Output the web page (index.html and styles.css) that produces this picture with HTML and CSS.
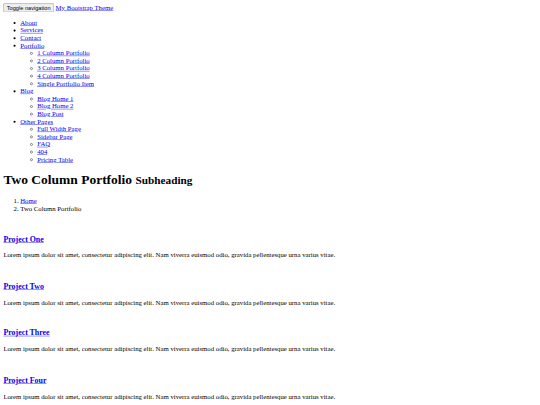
FILE: index.html
```html
<!DOCTYPE html>
<html lang="en" class="page">
<head>
<meta charset="utf-8">
<title>Two Column Portfolio</title>
<link rel="stylesheet" href="styles.css">
</head>
<body class="page-body">
<div class="page-scale">
<nav class="navbar">
  <div class="navbar-header">
    <button type="button" class="navbar-toggle">Toggle navigation</button>
    <a class="navbar-brand" href="#">My Bootstrap Theme</a>
  </div>
  <div class="navbar-collapse">
    <ul class="nav-list">
      <li><a href="#">About</a></li>
      <li><a href="#">Services</a></li>
      <li><a href="#">Contact</a></li>
      <li><a href="#">Portfolio</a>
        <ul class="dropdown">
          <li><a href="#">1 Column Portfolio</a></li>
          <li><a href="#">2 Column Portfolio</a></li>
          <li><a href="#">3 Column Portfolio</a></li>
          <li><a href="#">4 Column Portfolio</a></li>
          <li><a href="#">Single Portfolio Item</a></li>
        </ul>
      </li>
      <li><a href="#">Blog</a>
        <ul class="dropdown">
          <li><a href="#">Blog Home 1</a></li>
          <li><a href="#">Blog Home 2</a></li>
          <li><a href="#">Blog Post</a></li>
        </ul>
      </li>
      <li><a href="#">Other Pages</a>
        <ul class="dropdown">
          <li><a href="#">Full Width Page</a></li>
          <li><a href="#">Sidebar Page</a></li>
          <li><a href="#">FAQ</a></li>
          <li><a href="#">404</a></li>
          <li><a href="#">Pricing Table</a></li>
        </ul>
      </li>
    </ul>
  </div>
</nav>
<div class="container">
  <div class="row">
    <h1 class="page-header">Two Column Portfolio <small class="subheading">Subheading</small></h1>
    <ol class="breadcrumb">
      <li><a href="#">Home</a></li>
      <li class="active">Two Column Portfolio</li>
    </ol>
  </div>
  <div class="row">
    <div class="portfolio-item">
      <a class="thumb-link" href="#"><span class="thumb"></span></a>
      <h3 class="item-title"><a href="#">Project One</a></h3>
      <p class="item-text">Lorem ipsum dolor sit amet, consectetur adipiscing elit. Nam viverra euismod odio, gravida pellentesque urna varius vitae.</p>
    </div>
    <div class="portfolio-item">
      <a class="thumb-link" href="#"><span class="thumb"></span></a>
      <h3 class="item-title"><a href="#">Project Two</a></h3>
      <p class="item-text">Lorem ipsum dolor sit amet, consectetur adipiscing elit. Nam viverra euismod odio, gravida pellentesque urna varius vitae.</p>
    </div>
  </div>
  <div class="row">
    <div class="portfolio-item">
      <a class="thumb-link" href="#"><span class="thumb"></span></a>
      <h3 class="item-title"><a href="#">Project Three</a></h3>
      <p class="item-text">Lorem ipsum dolor sit amet, consectetur adipiscing elit. Nam viverra euismod odio, gravida pellentesque urna varius vitae.</p>
    </div>
    <div class="portfolio-item">
      <a class="thumb-link" href="#"><span class="thumb"></span></a>
      <h3 class="item-title"><a href="#">Project Four</a></h3>
      <p class="item-text">Lorem ipsum dolor sit amet, consectetur adipiscing elit. Nam viverra euismod odio, gravida pellentesque urna varius vitae.</p>
    </div>
  </div>
</div>
</div>
</body>
</html>
```
FILE: styles.css
```css
.page {
  overflow: hidden;
  background: #fff;
}
.page-body {
  margin: 0;
  overflow: hidden;
  font-family: "Liberation Serif", "Times New Roman", serif;
  font-size: 16px;
  color: #000;
  background: #fff;
}
.page-scale {
  width: 1264px;
  padding: 8px;
  transform: scale(0.421875);
  transform-origin: 0 0;
}
.navbar-toggle {
  font-family: "Liberation Sans", Arial, sans-serif;
  font-size: 13.333px;
}
.thumb {
  display: inline-block;
  width: 0;
  height: 0;
}
```
